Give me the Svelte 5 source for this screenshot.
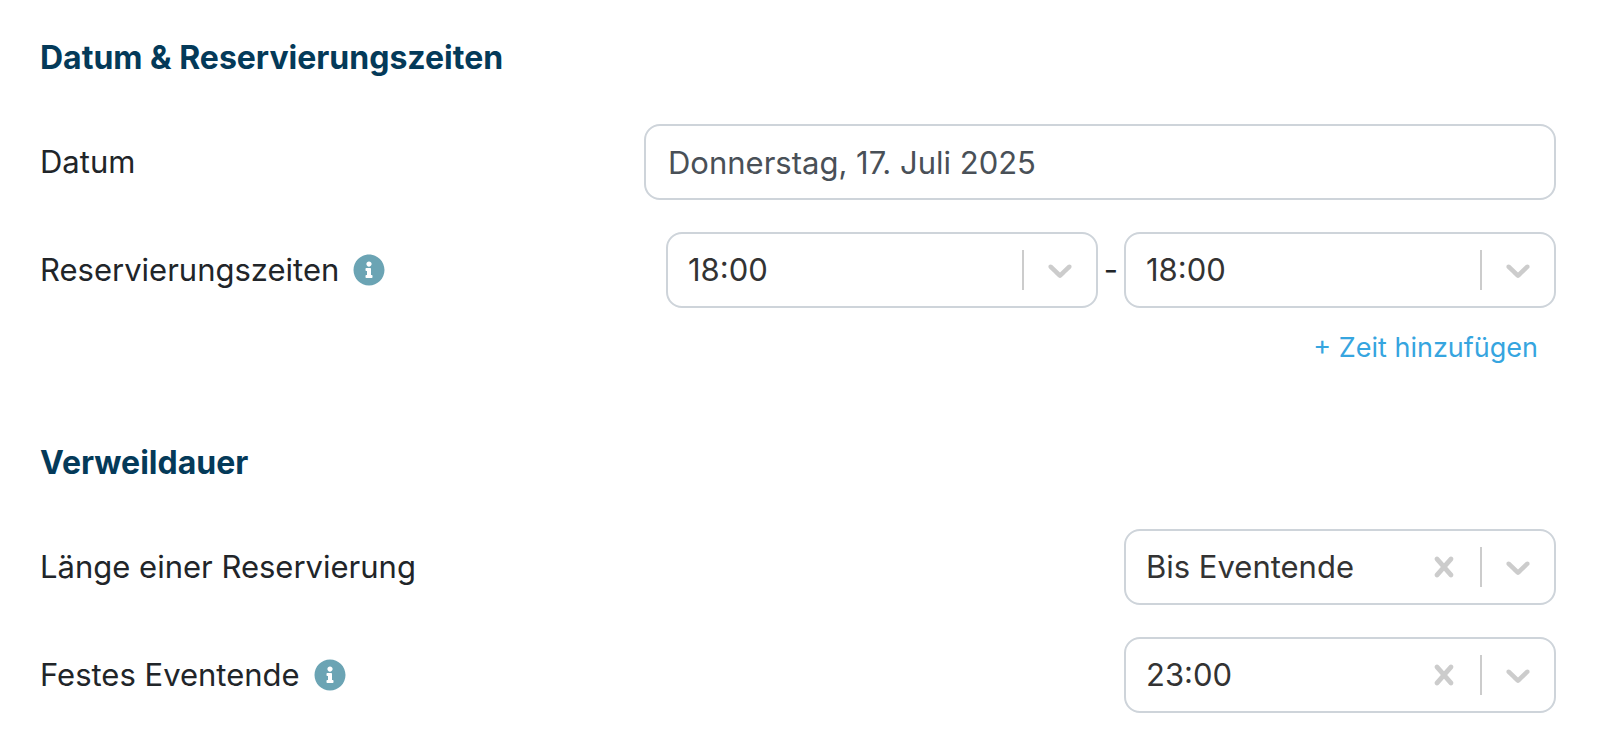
<script>
  let date = $state('Donnerstag, 17. Juli 2025');
  let from = $state('18:00');
  let to = $state('18:00');
  let duration = $state('Bis Eventende');
  let end = $state('23:00');
</script>

{#snippet info(label)}
  <button type="button" class="info" aria-label={label}>
    <svg viewBox="0 0 512 512" aria-hidden="true">
      <path d="M256 8C119.043 8 8 119.083 8 256c0 136.997 111.043 248 248 248s248-111.003 248-248C504 119.083 392.957 8 256 8zm0 110c23.196 0 42 18.804 42 42s-18.804 42-42 42-42-18.804-42-42 18.804-42 42-42zm56 254c0 6.627-5.373 12-12 12h-88c-6.627 0-12-5.373-12-12v-24c0-6.627 5.373-12 12-12h12v-64h-12c-6.627 0-12-5.373-12-12v-24c0-6.627 5.373-12 12-12h64c6.627 0 12 5.373 12 12v100h12c6.627 0 12 5.373 12 12v24z" />
    </svg>
  </button>
{/snippet}

{#snippet indicators(clear)}
  <div class="indicators">
    {#if clear}
      <button type="button" class="clear" aria-label="Auswahl löschen" onclick={clear}>
        <svg viewBox="0 0 20 20" aria-hidden="true">
          <path d="M14.348 14.849c-0.469 0.469-1.229 0.469-1.697 0l-2.651-3.030-2.651 3.029c-0.469 0.469-1.229 0.469-1.697 0-0.469-0.469-0.469-1.229 0-1.697l2.758-3.15-2.759-3.152c-0.469-0.469-0.469-1.228 0-1.697s1.228-0.469 1.697 0l2.652 3.031 2.651-3.031c0.469-0.469 1.228-0.469 1.697 0s0.469 1.229 0 1.697l-2.758 3.152 2.758 3.15c0.469 0.469 0.469 1.229 0 1.698z" />
        </svg>
      </button>
    {/if}
    <span class="separator"></span>
    <span class="arrow">
      <svg viewBox="0 0 20 20" aria-hidden="true">
        <path d="M4.516 7.548c0.436-0.446 1.043-0.481 1.576 0l3.908 3.747 3.908-3.747c0.533-0.481 1.141-0.446 1.574 0 0.436 0.445 0.408 1.197 0 1.615-0.406 0.418-4.695 4.502-4.695 4.502-0.217 0.223-0.502 0.335-0.787 0.335s-0.57-0.112-0.789-0.335c0 0-4.287-4.084-4.695-4.502s-0.436-1.17 0-1.615z" />
      </svg>
    </span>
  </div>
{/snippet}

<form>
  <section>
    <h2>Datum &amp; Reservierungszeiten</h2>
    <div class="row wide">
      <div class="label"><label for="date">Datum</label></div>
      <input id="date" type="text" bind:value={date} />
    </div>
    <div class="row wide">
      <div class="label">
        <label for="from">Reservierungszeiten</label>
        {@render info('Info zu Reservierungszeiten')}
      </div>
      <div class="times">
        <div class="select">
          <select id="from" bind:value={from}>
            <option>18:00</option>
            <option>19:00</option>
          </select>
          {@render indicators()}
        </div>
        <span class="dash">-</span>
        <div class="select">
          <select aria-label="Reservierungszeiten bis" bind:value={to}>
            <option>18:00</option>
            <option>19:00</option>
          </select>
          {@render indicators()}
        </div>
      </div>
    </div>
    <button type="button" class="add">+ Zeit hinzufügen</button>
  </section>

  <section>
    <h2>Verweildauer</h2>
    <div class="row narrow">
      <div class="label"><label for="duration">Länge einer Reservierung</label></div>
      <div class="select">
        <select id="duration" bind:value={duration}>
          <option>Bis Eventende</option>
        </select>
        {@render indicators(() => (duration = ''))}
      </div>
    </div>
    <div class="row narrow">
      <div class="label">
        <label for="end">Festes Eventende</label>
        {@render info('Info zu Festes Eventende')}
      </div>
      <div class="select">
        <select id="end" bind:value={end}>
          <option>23:00</option>
        </select>
        {@render indicators(() => (end = ''))}
      </div>
    </div>
  </section>
</form>

<style>
  :global(body) {
    margin: 0;
    background: #fff;
  }

  form {
    display: flex;
    flex-direction: column;
    gap: 75px;
    padding: 38px 49px 40px 40px;
    color: #212529;
    font-family: Inter, 'Liberation Sans', sans-serif;
    font-size: 31px;
    line-height: 40px;
  }

  section {
    display: flex;
    flex-direction: column;
    gap: 32px;
  }

  h2 {
    margin: 0 0 14px;
    color: #043a59;
    font-size: 32px;
    font-weight: 700;
    line-height: 40px;
  }

  input,
  select,
  button {
    margin: 0;
    box-sizing: border-box;
    font: inherit;
  }

  button {
    padding: 0;
    border: 0;
    background: none;
    cursor: pointer;
  }

  svg {
    display: block;
    fill: currentColor;
  }

  .row {
    display: grid;
    align-items: center;
  }

  .wide {
    grid-template-columns: 151fr 228fr;
  }

  .narrow {
    grid-template-columns: 271fr 108fr;
  }

  .label {
    display: flex;
    align-items: center;
    gap: 14px;
  }

  .info {
    color: #6ba4b4;
  }

  .info svg {
    width: 32px;
    height: 32px;
  }

  input,
  select {
    width: 100%;
    min-width: 0;
    height: 76px;
    border: 2px solid #ced4da;
    border-radius: 16px;
    background: #fff;
  }

  input {
    padding: 0 22px;
    color: #495057;
  }

  select {
    grid-area: 1 / 1;
    padding: 0 76px 0 20px;
    appearance: none;
    color: #333;
  }

  .times {
    display: flex;
    align-items: center;
    padding-left: 22px;
  }

  .select {
    display: grid;
    flex: 1;
    align-items: center;
  }

  .dash {
    width: 26px;
    text-align: center;
  }

  .indicators {
    display: flex;
    grid-area: 1 / 1;
    justify-self: end;
    align-items: center;
    padding-right: 2px;
    color: #ccc;
    pointer-events: none;
  }

  .indicators svg {
    width: 40px;
    height: 40px;
  }

  .clear,
  .arrow {
    padding: 16px;
    color: inherit;
  }

  .clear {
    pointer-events: auto;
  }

  .separator {
    width: 2px;
    height: 40px;
    background: #ccc;
  }

  .add {
    align-self: flex-end;
    margin-top: -12px;
    margin-right: 18px;
    color: #36a5df;
    font-size: 27px;
  }
</style>
